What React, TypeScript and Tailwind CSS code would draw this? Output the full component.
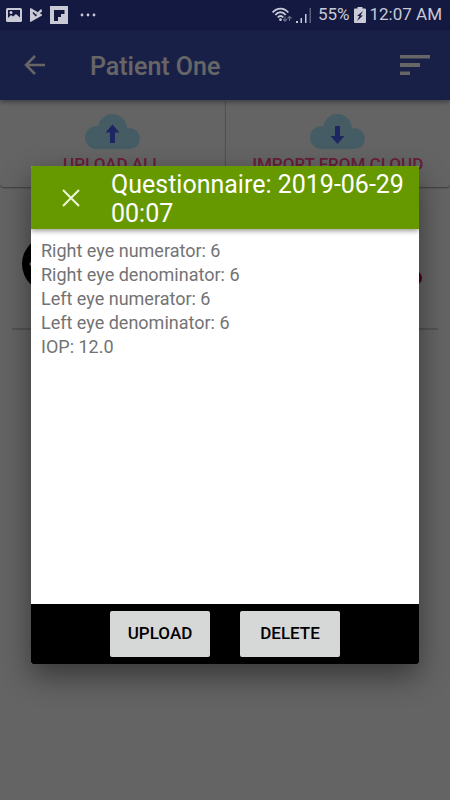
import { useState } from 'react';
import type { ReactNode } from 'react';

const answers = [
  { label: 'Right eye numerator', value: '6' },
  { label: 'Right eye denominator', value: '6' },
  { label: 'Left eye numerator', value: '6' },
  { label: 'Left eye denominator', value: '6' },
  { label: 'IOP', value: '12.0' },
];

const StatusBar = () => (
  <div className="flex h-[30px] items-center justify-between bg-[#131940] pr-2 pl-1.5 text-[#c9cad6]">
    <div className="flex items-center gap-2">
      <svg className="h-4 w-4" viewBox="0 0 16 16">
        <rect x="0" y="1" width="16" height="14" rx="1.5" fill="currentColor" />
        <path d="M2 3h12v7.500l-4-3.500-3 2.500-2-1.500-3 3z" fill="#131940" />
        <circle cx="5" cy="5.500" r="1.500" fill="currentColor" />
      </svg>
      <svg className="h-4 w-3" viewBox="0 0 12 16">
        <path d="M0 1.500Q0 .8 1 1.200L12 7.500Q12.500 8 12 8.500L1 14.800Q0 15.200 0 14.500z" fill="currentColor" />
        <path d="M3 5.500l2.700 3L12 2.500" fill="none" stroke="#131940" strokeWidth="1.500" />
        <path d="M6 7L11 2l1.500 2L7 8.500z" fill="currentColor" />
      </svg>
      <svg className="h-[18px] w-[18px]" viewBox="0 0 18 18">
        <rect width="18" height="18" fill="currentColor" />
        <path d="M4 4h10.500v4H11v3H8v4H4z" fill="#131940" />
      </svg>
      <svg className="ml-1 h-4 w-4" viewBox="0 0 16 16" fill="currentColor">
        <circle cx="2" cy="8" r="1.400" />
        <circle cx="8" cy="8" r="1.400" />
        <circle cx="14" cy="8" r="1.400" />
      </svg>
    </div>
    <div className="flex items-center gap-1">
      <svg className="h-4 w-5" viewBox="0 0 20 16" fill="none" stroke="currentColor">
        <path d="M.7 5.500C5 .3 12 .3 16.300 5.500M3.300 8c3-3.600 7.400-3.600 10.400 0M5.800 10.500c1.500-2 3.900-2 5.400 0" strokeWidth="1.900" />
        <circle cx="8.500" cy="12.700" r="1.400" fill="currentColor" stroke="none" />
        <path d="M13 9.500v4.500M11 12.200l2 2 2-2M17.500 14V9.500M15.500 11.500l2-2 2 2" strokeWidth="1.100" opacity=".5" />
      </svg>
      <svg className="h-4 w-4" viewBox="0 0 16 16" fill="currentColor">
        <rect x="0" y="14" width="2" height="2" />
        <rect x="4.500" y="11" width="1.500" height="5" />
        <rect x="9" y="7" width="1.500" height="9" />
        <rect x="13.500" y="1" width="1.500" height="15" opacity=".4" />
      </svg>
      <span className="ml-0.5 text-[17px]">55%</span>
      <svg className="h-4 w-3" viewBox="0 0 12 16">
        <path d="M3.500 0h5v1.500H11q1 0 1 1V15q0 1-1 1H1q-1 0-1-1V2.500q0-1 1-1h2.500z" fill="currentColor" />
        <path d="M9 4L3 9h2.500L3 14l6-5.500H6.500z" fill="#131940" />
      </svg>
      <span className="text-[17px]">12:07 AM</span>
    </div>
  </div>
);

const CloudIcon = ({ arrow }: { arrow: string }) => (
  <svg className="h-9 w-[55px]" viewBox="0 0 55 36">
    <g fill="#b0e6fa">
      <circle cx="11.500" cy="23.500" r="11.500" />
      <circle cx="27.500" cy="14.500" r="14.500" />
      <circle cx="44.500" cy="24.500" r="10.500" />
      <rect x="11" y="18" width="34" height="17" />
    </g>
    <path d={arrow} fill="#4b5ff5" />
  </svg>
);

const CloudButton = ({ label, arrow }: { label: string; arrow: string }) => (
  <button className="flex h-[87px] flex-1 flex-col items-center rounded-b-sm bg-[#fafafa] pt-3.5 text-[17px] font-medium text-[#ff4e8a] shadow-[0_1px_2px_rgba(0,0,0,0.4)]">
    <CloudIcon arrow={arrow} />
    <span className="leading-7">{label}</span>
  </button>
);

const ActionButton = ({ children }: { children: ReactNode }) => (
  <button className="h-[46px] w-[100px] rounded-xs bg-[#d6d7d7] text-[17px] font-medium text-black">
    {children}
  </button>
);

export default function App() {
  const [open, setOpen] = useState(true);

  return (
    <div className="relative flex min-h-screen flex-col bg-[#fafafa] font-[Roboto,sans-serif]">
      <StatusBar />
      <main className="relative flex flex-1 flex-col">
        <header className="z-0 flex h-[70px] items-center bg-[#3f51b5] px-5 text-white shadow-[0_2px_5px_rgba(0,0,0,0.4)]">
          <button aria-label="Back" className="p-1">
            <svg className="h-[22px] w-[22px]" viewBox="0 0 22 22" fill="none" stroke="currentColor" strokeWidth="2.500">
              <path d="M21 11H3M11 2l-9 9 9 9" />
            </svg>
          </button>
          <h1 className="ml-10 flex-1 pt-1 text-[25px] font-medium">Patient One</h1>
          <button aria-label="Sort">
            <svg className="h-5 w-[30px]" viewBox="0 0 30 20" fill="currentColor">
              <path d="M0 0h30v3.500H0zM0 8h20v4H0zM0 16.500h10V20H0z" />
            </svg>
          </button>
        </header>
        <div className="flex gap-px">
          <CloudButton label="UPLOAD ALL" arrow="M27.500 10.500l7 8H30V29h-5V18.500h-4.500z" />
          <CloudButton label="IMPORT FROM CLOUD" arrow="M27.500 30l7-8H30V12h-5v10h-4.500z" />
        </div>
        <div className="mx-3 flex h-[143px] items-center justify-between border-b-2 border-[#cfcfcf] px-2.5 pt-3">
          <svg className="h-14 w-14" viewBox="0 0 56 56">
            <circle cx="28" cy="28" r="28" />
            <path d="M7 28c10-14 32-14 42 0-10 14-32 14-42 0z" fill="#fafafa" />
          </svg>
          <svg className="mt-6 mr-1.5 h-5 w-5" viewBox="0 0 20 20" fill="#c2003c">
            <circle cx="13" cy="12" r="7" />
          </svg>
        </div>
        {open && (
          <div className="absolute inset-0 flex items-center justify-center bg-black/60 px-[31px]">
            <section
              role="dialog"
              aria-label="Questionnaire"
              className="flex w-full flex-col overflow-hidden rounded-xs bg-white shadow-[0_12px_30px_rgba(0,0,0,0.45)]"
            >
              <div className="z-10 flex items-center bg-[#669900] pr-3 pl-[31px] text-white shadow-[0_2px_5px_rgba(0,0,0,0.4)]">
                <button aria-label="Close" className="text-[#eef6d8]" onClick={() => setOpen(false)}>
                  <svg className="h-[18px] w-[18px]" viewBox="0 0 18 18" fill="none" stroke="currentColor" strokeWidth="2">
                    <path d="M1 1l16 16M17 1L1 17" />
                  </svg>
                </button>
                <h2 className="ml-[31px] pt-1 pb-px text-[25px] leading-[29px]">Questionnaire: 2019-06-29 00:07</h2>
              </div>
              <div className="min-h-[375px] px-2.5 pt-2.5 text-lg leading-6 text-[#737373]">
                {answers.map((a) => (
                  <p key={a.label}>
                    {a.label}: {a.value}
                  </p>
                ))}
              </div>
              <footer className="flex h-[60px] items-center justify-center gap-[30px] bg-black">
                <ActionButton>UPLOAD</ActionButton>
                <ActionButton>DELETE</ActionButton>
              </footer>
            </section>
          </div>
        )}
      </main>
    </div>
  );
}
